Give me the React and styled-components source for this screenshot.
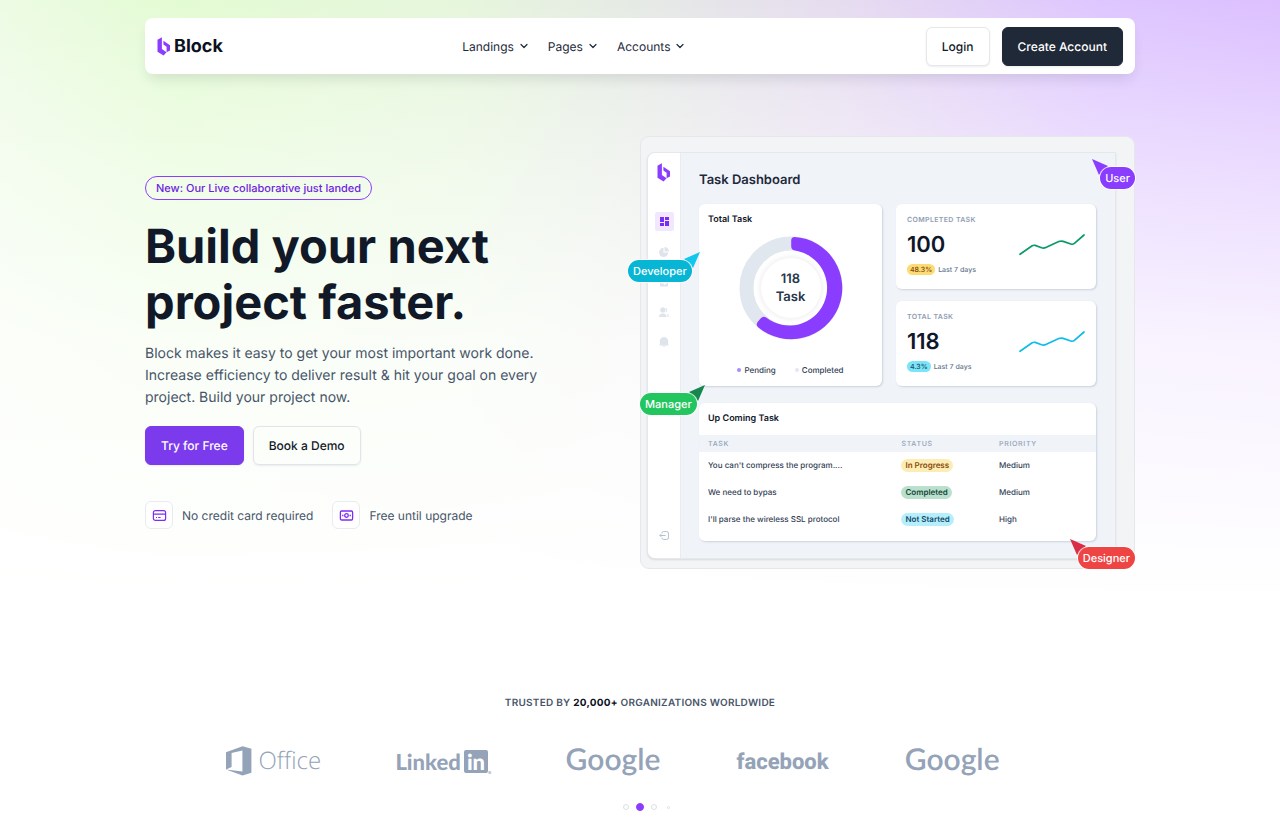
import React from 'react';
import styled, { createGlobalStyle } from 'styled-components';
import { ChevronDown } from 'lucide-react';

const GlobalStyle = createGlobalStyle`
  * {
    box-sizing: border-box;
  }

  body {
    margin: 0;
    background: #fff;
    color: #0f172a;
    font-family: Inter, "Liberation Sans", sans-serif;
    text-rendering: geometricPrecision;
    -webkit-font-smoothing: antialiased;
  }

  h1, h2, h3, p, ul {
    margin: 0;
    padding: 0;
  }

  button {
    font-family: inherit;
    text-rendering: inherit;
    cursor: pointer;
  }
`;

const links = ['Landings', 'Pages', 'Accounts'];

const tasks = [
  { name: "You can't compress the program....", status: 'In Progress', bg: '#fdecb3', color: '#854d0e', priority: 'Medium' },
  { name: 'We need to bypas', status: 'Completed', bg: '#bbdfcd', color: '#14493a', priority: 'Medium' },
  { name: "I'll parse the wireless SSL protocol", status: 'Not Started', bg: '#b5effb', color: '#134a6b', priority: 'High' },
];

const stats = [
  { label: 'COMPLETED TASK', value: '100', change: '48.3%', bg: '#fcdc72', color: '#7c4a12', line: '#0b9a69' },
  { label: 'TOTAL TASK', value: '118', change: '4.3%', bg: '#7be4f8', color: '#164e63', line: '#0fbdeb' },
];

const BlockMark = () => (
  <svg width="14" height="19" viewBox="0 0 14 19" fill="#8b3dff" aria-hidden="true">
    <path d="M.5 2.7 4.9.3v11.6l4.6 3.4-2.9 3.2L.5 14.8z" />
    <path d="M6.4 3.7 13 8.2v5.2l-3.4 1.9V9.7L6.4 7.6z" />
  </svg>
);

const Navbar = () => (
  <NavbarContainer>
    <Brand href="#">
      <BlockMark />
      Block
    </Brand>
    <NavLinks>
      {links.map((link) => (
        <NavButton type="button" key={link}>
          {link}
          <ChevronDown size={12} strokeWidth={2.4} />
        </NavButton>
      ))}
    </NavLinks>
    <NavActions>
      <Button type="button">Login</Button>
      <Button type="button" $variant="dark">Create Account</Button>
    </NavActions>
  </NavbarContainer>
);

const CardIcon = () => (
  <svg width="15" height="15" viewBox="0 0 15 15" fill="none" stroke="#7c2df5" strokeWidth="1.2" aria-hidden="true">
    <rect x="1.4" y="2.6" width="12.2" height="9.8" rx="2" />
    <path d="M1.4 6.2h12.2M4 9.5h1M6.2 9.5h2.4" />
  </svg>
);

const CashIcon = () => (
  <svg width="15" height="15" viewBox="0 0 15 15" fill="none" stroke="#7c2df5" strokeWidth="1.3" aria-hidden="true">
    <rect x="1.4" y="3" width="12.2" height="9" rx="1.2" />
    <circle cx="7.5" cy="7.5" r="1.8" />
    <path d="M3.8 6.8v1.4M11.2 6.8v1.4" />
  </svg>
);

const Donut = () => (
  <svg width="104" height="104" viewBox="0 0 104 104" aria-hidden="true">
    <circle cx="52" cy="52" r="44.5" fill="none" stroke="#e1e7ef" strokeWidth="14" />
    <path
      d="M55.5 .9A51.2 51.2 0 1 1 19.4 91.4q-3.2-2.6-.4-6l2.8-3.2q2.4-2.8 5.4-.6A37.7 37.7 0 1 0 56 14.6q-3.8-.5-3.8-4V4.4q0-3.4 3.3-3.5z"
      fill="#8b3dff"
    />
  </svg>
);

const Sparkline = ({ color }) => (
  <svg width="66" height="22" viewBox="0 0 66 22" fill="none" aria-hidden="true">
    <path
      d="M1 20.3 12.8 12q1.6-1.1 3.4-.6l6.4 2.4q2.2.8 4.2-.2l13-6q2.2-1 4.4-.2l7.6 2.6q2 .7 3.6-.7L65 1"
      stroke={color}
      strokeWidth="1.7"
      strokeLinecap="round"
    />
  </svg>
);

const Sidebar = () => (
  <SidebarContainer>
    <BlockMark />
    <SideNav>
      <SideButton type="button" $active aria-label="Dashboard">
        <svg width="9" height="9" viewBox="0 0 9 9">
          <path d="M0 0h4v5H0zM5 0h4v3H5zM0 6h4v3H0zM5 4h4v5H5z" />
        </svg>
      </SideButton>
      <SideButton type="button" aria-label="Reports">
        <svg width="10" height="10" viewBox="0 0 10 10">
          <path d="M4.5.8V5.5h4.7A4.6 4.6 0 1 1 4.5.8zM5.5 0A4.5 4.5 0 0 1 10 4.5H5.5z" />
        </svg>
      </SideButton>
      <SideButton type="button" aria-label="Tasks">
        <svg width="10" height="10" viewBox="0 0 10 10">
          <path d="M1 1h8v8.4H1zM3 6.6h1.5L5.5 8l1.6-1.4H8V4H2v2.6z" fillRule="evenodd" />
        </svg>
      </SideButton>
      <SideButton type="button" aria-label="People">
        <svg width="10" height="10" viewBox="0 0 10 10">
          <circle cx="3.8" cy="2.9" r="2.6" />
          <path d="M0 10q0-3.6 3.8-3.6T7.6 10zM6.4.4a2.6 2.6 0 0 1 0 5q1.4-2.4 0-5zM7.6 6.6Q10 7.2 10 10H8.6q0-2-1-3.4z" />
        </svg>
      </SideButton>
      <SideButton type="button" aria-label="Notifications">
        <svg width="10" height="10" viewBox="0 0 10 10">
          <path d="M.8 7.4V4.2a4.2 4.2 0 0 1 8.4 0v3.2l.4 1.2H.4zM3.6 9h2.8v.8H3.6z" />
        </svg>
      </SideButton>
    </SideNav>
    <LogoutButton type="button" aria-label="Log out">
      <svg width="10" height="9" viewBox="0 0 10 9" fill="none" stroke="#b4c0d0" strokeWidth="1">
        <path d="M3 2.4V2Q3 .6 4.4.6h3.4Q9.4.6 9.4 2v5q0 1.4-1.6 1.4H4.4Q3 8.4 3 7v-.4M6.6 4.5H.8M2.4 2.9.8 4.5l1.6 1.6" />
      </svg>
    </LogoutButton>
  </SidebarContainer>
);

const TaskTable = () => (
  <Card>
    <TableTitle id="upcoming">Up Coming Task</TableTitle>
    <Table aria-labelledby="upcoming">
      <thead>
        <tr>
          <th>TASK</th>
          <th>STATUS</th>
          <th>PRIORITY</th>
        </tr>
      </thead>
      <tbody>
        {tasks.map((task) => (
          <tr key={task.name}>
            <td>{task.name}</td>
            <td><Status $bg={task.bg} $color={task.color}>{task.status}</Status></td>
            <td>{task.priority}</td>
          </tr>
        ))}
      </tbody>
    </Table>
  </Card>
);

const CursorTag = ({ as: Position, color, pointer, side, children }) => (
  <Position>
    <TagPointer $side={side} width="16" height="16" viewBox="0 0 16 16" fill={pointer}>
      <path d={side === 'left' ? 'M0 0 16 7 7 16z' : 'M16 0 9 16 0 7z'} />
    </TagPointer>
    <TagLabel $color={color}>{children}</TagLabel>
  </Position>
);

const Dashboard = () => (
  <Frame>
    <Panel>
      <Sidebar />
      <PanelBody>
        <PanelTitle>Task Dashboard</PanelTitle>
        <CardGrid>
          <ChartCard>
            <CardTitle>Total Task</CardTitle>
            <ChartArea>
              <Donut />
              <ChartLabel>118<br />Task</ChartLabel>
            </ChartArea>
            <Legend>
              <LegendItem $color="#a78bfa">Pending</LegendItem>
              <LegendItem $color="#e2e8f0">Completed</LegendItem>
            </Legend>
          </ChartCard>
          <StatColumn>
            {stats.map((stat) => (
              <StatCard key={stat.label}>
                <div>
                  <StatLabel>{stat.label}</StatLabel>
                  <StatValue>{stat.value}</StatValue>
                  <StatMeta>
                    <Change $bg={stat.bg} $color={stat.color}>{stat.change}</Change>
                    Last 7 days
                  </StatMeta>
                </div>
                <Sparkline color={stat.line} />
              </StatCard>
            ))}
          </StatColumn>
        </CardGrid>
        <TaskTable />
      </PanelBody>
    </Panel>
    <CursorTag as={UserTag} color="#8b3dff" pointer="#8b3dff" side="left">User</CursorTag>
    <CursorTag as={DeveloperTag} color="#06b6d4" pointer="#12c6ee" side="right">Developer</CursorTag>
    <CursorTag as={ManagerTag} color="#22c55e" pointer="#15874f" side="right">Manager</CursorTag>
    <CursorTag as={DesignerTag} color="#ef4444" pointer="#d92c45" side="left">Designer</CursorTag>
  </Frame>
);

const Trusted = () => (
  <TrustedSection>
    <TrustedText>TRUSTED BY <strong>20,000+</strong> ORGANIZATIONS WORLDWIDE</TrustedText>
    <LogoRow>
      <Logo>
        <OfficeText>
          <svg width="26" height="30" viewBox="0 0 26 30" fill="#94a3b8" aria-hidden="true">
            <path fillRule="evenodd" d="M0 6.3 16.6.2 25.4 2.8v24L16.6 29.6 0 23.6l16.4 2V4.4L5.6 7v14L0 23.6z" />
          </svg>
          Office
        </OfficeText>
      </Logo>
      <Logo>
        <LinkedText>
          Linked<InBox>in</InBox><Registered>®</Registered>
        </LinkedText>
      </Logo>
      <Logo><GoogleText>Google</GoogleText></Logo>
      <Logo><FacebookText>facebook</FacebookText></Logo>
      <Logo><GoogleText>Google</GoogleText></Logo>
    </LogoRow>
    <Dots>
      <Dot type="button" aria-label="Slide 1" $size={6} />
      <Dot type="button" aria-label="Slide 2" $size={8} $active />
      <Dot type="button" aria-label="Slide 3" $size={6} />
      <Dot type="button" aria-label="Slide 4" $size={3} />
    </Dots>
  </TrustedSection>
);

const App = () => (
  <Page>
    <GlobalStyle />
    <Container>
      <Navbar />
      <Hero>
        <Intro>
          <Announcement href="#">New: Our Live collaborative just landed</Announcement>
          <Headline>Build your next project faster.</Headline>
          <Lead>
            Block makes it easy to get your most important work done.
            Increase efficiency to deliver result &amp; hit your goal on every
            project. Build your project now.
          </Lead>
          <Actions>
            <Button type="button" $variant="primary">Try for Free</Button>
            <Button type="button" $variant="clear">Book a Demo</Button>
          </Actions>
          <Features>
            <Feature><FeatureIcon><CardIcon /></FeatureIcon>No credit card required</Feature>
            <Feature><FeatureIcon><CashIcon /></FeatureIcon>Free until upgrade</Feature>
          </Features>
        </Intro>
        <Dashboard />
      </Hero>
      <Trusted />
    </Container>
  </Page>
);

export default App;

// Page

const Page = styled.div`
  min-height: 100vh;
  padding: 18px 24px;
  background:
    linear-gradient(to bottom, rgba(255, 255, 255, 0) 0, rgba(255, 255, 255, 0.45) 170px, rgba(255, 255, 255, 0.8) 340px, #fff 600px),
    linear-gradient(to right, #edfbe4 0%, #e3fbd3 14%, #e6f6dc 36%, #e6dcf0 66%, #dec6ff 86%, #dcc0ff 100%);
`;

const Container = styled.div`
  max-width: 990px;
  margin: 0 auto;
`;

// Navbar

const NavbarContainer = styled.nav`
  display: flex;
  align-items: center;
  justify-content: space-between;
  height: 56px;
  padding: 0 12px;
  background: #fff;
  border-radius: 8px;
  box-shadow: 0 8px 14px -4px rgba(15, 23, 42, 0.12);
`;

const Brand = styled.a`
  display: flex;
  align-items: center;
  gap: 3px;
  color: #0b1120;
  font-size: 18px;
  font-weight: 700;
  text-decoration: none;
`;

const NavLinks = styled.div`
  display: flex;
  gap: 18px;
`;

const NavButton = styled.button`
  display: flex;
  align-items: center;
  gap: 4px;
  padding: 0;
  border: 0;
  background: none;
  color: #1e293b;
  font-size: 12px;
`;

const NavActions = styled.div`
  display: flex;
  gap: 12px;
`;

const variants = {
  plain: { bg: '#fff', color: '#111827', border: '#e5e7eb' },
  dark: { bg: '#1f2937', color: '#fff', border: '#1f2937' },
  primary: { bg: '#7c3aed', color: '#fff', border: '#7c3aed' },
  clear: { bg: 'transparent', color: '#111827', border: '#e2e4e9' },
};

const Button = styled.button`
  height: 39px;
  padding: 0 15px;
  border: 1px solid ${({ $variant = 'plain' }) => variants[$variant].border};
  border-radius: 6px;
  background: ${({ $variant = 'plain' }) => variants[$variant].bg};
  box-shadow: 0 1px 2px rgba(15, 23, 42, 0.08);
  color: ${({ $variant = 'plain' }) => variants[$variant].color};
  font-size: 12px;
  font-weight: 500;
`;

// Hero

const Hero = styled.section`
  display: grid;
  grid-template-columns: minmax(0, 1fr) minmax(0, 1fr);
  align-items: center;
  padding-top: 62px;
`;

const Intro = styled.div`
  display: flex;
  flex-direction: column;
  align-items: flex-start;
`;

const Announcement = styled.a`
  padding: 0 10px;
  border: 1px solid #8b3dff;
  border-radius: 12px;
  color: #6d1fe0;
  font-size: 11px;
  font-weight: 500;
  line-height: 22px;
  text-decoration: none;
`;

const Headline = styled.h1`
  max-width: 400px;
  padding-top: 19px;
  color: #111827;
  font-size: 47px;
  font-weight: 700;
  line-height: 56px;
`;

const Lead = styled.p`
  max-width: 400px;
  padding-top: 12px;
  color: #475569;
  font-size: 14px;
  line-height: 22px;
`;

const Actions = styled.div`
  display: flex;
  gap: 9px;
  padding-top: 17px;
`;

const Features = styled.ul`
  display: flex;
  gap: 19px;
  padding-top: 36px;
  list-style: none;
`;

const Feature = styled.li`
  display: flex;
  align-items: center;
  gap: 9px;
  color: #475569;
  font-size: 12px;
`;

const FeatureIcon = styled.span`
  display: flex;
  align-items: center;
  justify-content: center;
  width: 28px;
  height: 28px;
  border: 1px solid #e9ebef;
  border-radius: 6px;
  background: #fff;
`;

// Dashboard

const Frame = styled.div`
  position: relative;
  padding: 15px 18px 9px 6px;
  border: 1px solid #e5e7eb;
  border-radius: 9px;
  background: #f3f4f6;
`;

const Panel = styled.div`
  display: flex;
  overflow: hidden;
  border: 1px solid #e5e7eb;
  border-radius: 8px 0 0 8px;
  background: #f0f3f8;
  box-shadow: 0 1px 2px rgba(15, 23, 42, 0.12);
`;

const SidebarContainer = styled.aside`
  display: flex;
  flex-direction: column;
  align-items: center;
  width: 33px;
  padding: 10px 0 18px;
  border-right: 1px solid #e8ecf1;
  background: #fff;
`;

const SideNav = styled.div`
  display: flex;
  flex-direction: column;
  gap: 11px;
  padding-top: 30px;
`;

const SideButton = styled.button`
  display: flex;
  align-items: center;
  justify-content: center;
  width: 19px;
  height: 19px;
  padding: 0;
  border: 0;
  border-radius: 2px;
  background: ${({ $active }) => ($active ? '#f1e8ff' : 'transparent')};
  fill: ${({ $active }) => ($active ? '#7c2df5' : '#dfe4ec')};
`;

const LogoutButton = styled.button`
  display: flex;
  margin-top: auto;
  padding: 0;
  border: 0;
  background: none;
`;

const PanelBody = styled.div`
  flex: 1;
  min-width: 0;
  padding: 16px 19px 17px 18px;
`;

const PanelTitle = styled.h2`
  padding-bottom: 13px;
  color: #1e293b;
  font-size: 13px;
  font-weight: 600;
  line-height: 22px;
`;

const CardGrid = styled.div`
  display: grid;
  grid-template-columns: 183fr 200fr;
  gap: 14px;
  padding-bottom: 17px;
`;

const Card = styled.section`
  overflow: hidden;
  border-radius: 6px;
  background: #fff;
  box-shadow: 1px 1px 2px #cbd2de;
`;

const ChartCard = styled(Card)`
  display: flex;
  flex-direction: column;
  height: 182px;
  padding: 9px;
`;

const CardTitle = styled.h3`
  font-size: 9px;
  font-weight: 600;
  line-height: 14px;
`;

const ChartArea = styled.div`
  display: grid;
  place-items: center;
  padding-top: 9px;

  > * {
    grid-area: 1 / 1;
  }
`;

const ChartLabel = styled.div`
  width: 60px;
  padding: 12px 0;
  border-radius: 50%;
  box-shadow: 0 0 6px rgba(15, 23, 42, 0.1);
  color: #27364b;
  font-size: 13px;
  font-weight: 600;
  line-height: 18px;
  text-align: center;
`;

const Legend = styled.div`
  display: flex;
  justify-content: center;
  gap: 19px;
  margin-top: auto;
`;

const LegendItem = styled.span`
  display: flex;
  align-items: center;
  gap: 3px;
  color: #334155;
  font-size: 8px;
  font-weight: 500;
  line-height: 14px;

  &::before {
    content: '';
    width: 4px;
    height: 4px;
    border-radius: 50%;
    background: ${({ $color }) => $color};
  }
`;

const StatColumn = styled.div`
  display: grid;
  grid-template-rows: 1fr 1fr;
  gap: 12px;
`;

const StatCard = styled(Card)`
  display: flex;
  align-items: center;
  justify-content: space-between;
  padding: 0 11px 4px;
`;

const StatLabel = styled.p`
  color: #8e9db4;
  font-size: 7px;
  font-weight: 600;
  letter-spacing: 0.05em;
  line-height: 10px;
`;

const StatValue = styled.p`
  padding: 5px 0 4px;
  font-size: 22px;
  font-weight: 600;
  line-height: 30px;
`;

const StatMeta = styled.div`
  display: flex;
  align-items: center;
  gap: 3px;
  color: #64748b;
  font-size: 7px;
  font-weight: 500;
`;

const Change = styled.span`
  padding: 0 3px;
  border-radius: 6px;
  background: ${({ $bg }) => $bg};
  color: ${({ $color }) => $color};
  line-height: 11px;
`;

const TableTitle = styled.h3`
  padding: 9px;
  font-size: 9px;
  font-weight: 600;
  line-height: 14px;
`;

const Table = styled.table`
  width: 100%;
  margin-bottom: 8px;
  border-collapse: collapse;
  table-layout: fixed;
  text-align: left;

  th {
    height: 17px;
    padding: 0;
    background: #f0f3f8;
    color: #94a3b8;
    font-size: 7px;
    font-weight: 500;
    letter-spacing: 0.1em;
  }

  td {
    height: 27px;
    padding: 0 0 1px;
    color: #334155;
    font-size: 8px;
    font-weight: 500;
    line-height: 12px;
  }

  th:first-child {
    width: 51%;
  }

  th:last-child {
    width: 97px;
  }

  th:first-child, td:first-child {
    padding-left: 9px;
  }
`;

const Status = styled.span`
  display: inline-block;
  padding: 0 4px;
  border-radius: 7px;
  background: ${({ $bg }) => $bg};
  color: ${({ $color }) => $color};
  font-weight: 600;
  line-height: 13px;
`;

// Collaborator cursors, floating over the frame

const Tag = styled.div`
  position: absolute;
`;

const TagLabel = styled.span`
  position: relative;
  display: block;
  padding: 0 5px;
  border-radius: 11px;
  background: ${({ $color }) => $color};
  box-shadow: 0 0 0 1px rgba(255, 255, 255, 0.8);
  color: #fff;
  font-size: 11px;
  font-weight: 500;
  line-height: 22px;
`;

const TagPointer = styled.svg`
  position: absolute;
  top: -8px;
  ${({ $side }) => $side}: -8px;
`;

const UserTag = styled(Tag)`
  top: 30px;
  right: -1px;
`;

const DeveloperTag = styled(Tag)`
  top: 123px;
  left: -13px;
`;

const ManagerTag = styled(Tag)`
  top: 256px;
  left: -1px;
`;

const DesignerTag = styled(Tag)`
  right: -1px;
  bottom: -1px;
`;

// Trusted by

const TrustedSection = styled.section`
  padding-top: 126px;
`;

const TrustedText = styled.p`
  color: #475569;
  font-size: 10px;
  font-weight: 600;
  letter-spacing: 0.025em;
  line-height: 16px;
  text-align: center;

  strong {
    color: #0b1120;
    font-weight: 700;
  }
`;

const LogoRow = styled.div`
  display: grid;
  grid-template-columns: repeat(5, 1fr);
  padding: 30px 98px 0 44px;
`;

const Logo = styled.div`
  display: flex;
  align-items: center;
  justify-content: center;
  height: 40px;
  color: #94a3b8;
`;

const OfficeText = styled.span`
  display: flex;
  align-items: center;
  gap: 6px;
  font-family: "Open Sans", sans-serif;
  font-size: 24px;
  font-weight: 300;
  line-height: 30px;
`;

const LinkedText = styled.span`
  display: flex;
  align-items: center;
  font-family: Lato, sans-serif;
  font-size: 22px;
  font-weight: 900;
`;

const InBox = styled.span`
  margin-left: 3px;
  padding: 0 3px;
  border-radius: 2px;
  background: #94a3b8;
  color: #fff;
  line-height: 23px;
`;

const Registered = styled.span`
  align-self: flex-end;
  font-size: 4px;
`;

const GoogleText = styled.span`
  padding-bottom: 5px;
  font-family: Lato, sans-serif;
  font-size: 30px;
  font-weight: 600;
`;

const FacebookText = styled.span`
  padding-top: 2px;
  font-family: Roboto, sans-serif;
  font-size: 22px;
  font-weight: 800;
`;

const Dots = styled.div`
  display: grid;
  grid-template-columns: repeat(4, 14px);
  place-items: center;
  justify-content: center;
  height: 8px;
  margin-top: 22px;
  padding-left: 14px;
`;

const Dot = styled.button`
  width: ${({ $size }) => $size}px;
  height: ${({ $size }) => $size}px;
  padding: 0;
  border: 1px solid ${({ $active }) => ($active ? '#8b3dff' : '#dcdfe4')};
  border-radius: 50%;
  background: ${({ $active }) => ($active ? '#8b3dff' : '#fff')};
`;
